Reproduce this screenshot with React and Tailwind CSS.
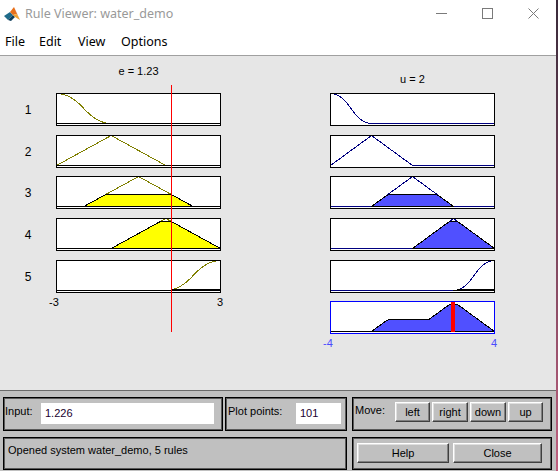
import React from "react";

const zmf = (x, a, b) => {
  if (x <= a) return 1;
  if (x >= b) return 0;
  const m = (a + b) / 2;
  if (x <= m) return 1 - 2 * ((x - a) / (b - a)) ** 2;
  return 2 * ((x - b) / (b - a)) ** 2;
};
const smf = (x, a, b) => 1 - zmf(x, a, b);
const trimf = (x, a, b, c) => Math.max(0, Math.min((x - a) / (b - a), (c - x) / (c - b)));

const W1 = 0.387;
const W2 = 0.887;
const W3 = 0.0255;

const leftRows = [
  { f: (x) => zmf(x, -3, -1), w: 0 },
  { f: (x) => trimf(x, -3, -1, 1), w: 0 },
  { f: (x) => trimf(x, -2, 0, 2), w: W1 },
  { f: (x) => trimf(x, -1, 1, 3), w: W2 },
  { f: (x) => smf(x, 1, 3), w: W3 },
];
const rightRows = [
  { f: (x) => zmf(x, -4, -2), w: 0 },
  { f: (x) => trimf(x, -4, -2, 0), w: 0 },
  { f: (x) => trimf(x, -2, 0, 2), w: W1 },
  { f: (x) => trimf(x, 0, 2, 4), w: W2 },
  { f: (x) => smf(x, 2, 4), w: W3 },
];
const aggF = (x) =>
  Math.max(
    Math.min(trimf(x, -2, 0, 2), W1),
    Math.min(trimf(x, 0, 2, 4), W2),
    Math.min(smf(x, 2, 4), W3)
  );

const rowMargins = ["", "mt-[9px]", "mt-[8px]", "mt-[9px]", "mt-[9px]"];

function Plot({ lo, hi, f, w, side, agg }) {
  const N = 101;
  const xs = Array.from({ length: N }, (_, i) => lo + ((hi - lo) * i) / (N - 1));
  const X = (v) => 0.5 + ((v - lo) / (hi - lo)) * 164;
  const Y = (m) => 30.5 - 30 * m;
  const lineColor = side === "left" ? "#808000" : "#000080";
  const fillColor = side === "left" ? "#ffff00" : "#5050ff";

  let fillPts = null;
  if (agg) {
    const vals = xs.map((v) => aggF(v));
    let first = vals.findIndex((v) => v > 0);
    let last = vals.length - 1 - [...vals].reverse().findIndex((v) => v > 0);
    first = Math.max(0, first - 1);
    last = Math.min(N - 1, last + 1);
    const pts = [];
    for (let i = first; i <= last; i++) pts.push(`${X(xs[i])},${Y(vals[i])}`);
    pts.push(`${X(xs[last])},30.5`, `${X(xs[first])},30.5`);
    fillPts = pts.join(" ");
  } else if (w > 0) {
    const vals = xs.map((v) => Math.min(f(v), w));
    let first = vals.findIndex((v) => v > 0);
    let last = vals.length - 1 - [...vals].reverse().findIndex((v) => v > 0);
    first = Math.max(0, first - 1);
    last = Math.min(N - 1, last + 1);
    const pts = [];
    for (let i = first; i <= last; i++) pts.push(`${X(xs[i])},${Y(vals[i])}`);
    pts.push(`${X(xs[last])},30.5`, `${X(xs[first])},30.5`);
    fillPts = pts.join(" ");
  }

  const curve = f ? xs.map((v) => `${X(v)},${Y(f(v))}`).join(" ") : null;

  return (
    <svg width="165" height="33" viewBox="0 0 165 33" shapeRendering="crispEdges" className="block bg-white">
      {agg ? (
        <line x1="0" y1="30.5" x2="165" y2="30.5" stroke="#000" strokeWidth="1" />
      ) : side === "left" ? (
        <>
          <polyline points={curve} fill="none" stroke={lineColor} strokeWidth="1" />
          <line x1="0" y1="30.5" x2="165" y2="30.5" stroke="#000" strokeWidth="1" />
        </>
      ) : (
        <polyline points={curve} fill="none" stroke={lineColor} strokeWidth="1" />
      )}
      {fillPts && <polygon points={fillPts} fill={fillColor} stroke="#000" strokeWidth="1" />}
      {agg && <rect x="121" y="1" width="4" height="30" fill="#ff0000" />}
      <rect x="0.5" y="0.5" width="164" height="32" fill="none" stroke={agg ? "#0000ff" : "#000"} strokeWidth="1" />
    </svg>
  );
}

function MatlabIcon() {
  return (
    <svg width="16" height="16" viewBox="0 0 16 16">
      <polygon points="0,10 6,6 9,9 4,14" fill="#1f6b8a" />
      <polygon points="4,14 9,9 11,11 7,15" fill="#0d3c5a" />
      <polygon points="6,6 10,1 13,8 9,9" fill="#e8701a" />
      <polygon points="10,1 16,14 13,8" fill="#b5361a" />
      <polygon points="9,9 13,8 16,14 11,11" fill="#f0a030" />
    </svg>
  );
}

function Btn({ children, className }) {
  return (
    <div
      className={
        "flex items-center justify-center bg-[#c0c0c0] border border-t-white border-l-white border-b-[#404040] border-r-[#404040] shadow-[inset_-1px_-1px_0_#808080,inset_1px_1px_0_#dfdfdf] text-[11px] leading-[13px] text-black " +
        className
      }
    >
      {children}
    </div>
  );
}

const frame = "border border-black shadow-[inset_0_0_0_1px_#5a5a5a]";

export default function App() {
  return (
    <div className="flex w-[558px] h-[471px] bg-gradient-to-b from-[#3a2a3a] to-[#c06080] font-['Liberation_Sans',Arial,sans-serif]">
      <div className="flex flex-col w-[556px] h-[471px] bg-white">
        {/* Title bar */}
        <div className="flex items-center h-[30px] bg-white">
          <div className="ml-[4px] mb-[3px]">
            <MatlabIcon />
          </div>
          <div className="ml-[5px] mb-[2px] text-[12.5px] text-[#999999] font-['Noto_Sans',sans-serif]">
            Rule Viewer: water_demo
          </div>
          <div className="ml-auto flex h-full">
            <div className="w-[46px] flex items-center justify-center pb-[3px]">
              <svg width="11" height="11" viewBox="0 0 11 11" shapeRendering="crispEdges">
                <line x1="0" y1="5.5" x2="11" y2="5.5" stroke="#7a7a7a" />
              </svg>
            </div>
            <div className="w-[46px] flex items-center justify-center pb-[3px]">
              <svg width="11" height="11" viewBox="0 0 11 11" shapeRendering="crispEdges">
                <rect x="0.5" y="0.5" width="10" height="10" fill="none" stroke="#7a7a7a" />
              </svg>
            </div>
            <div className="w-[46px] flex items-center justify-center pb-[3px]">
              <svg width="11" height="11" viewBox="0 0 11 11">
                <line x1="0.5" y1="0.5" x2="10.5" y2="10.5" stroke="#7a7a7a" />
                <line x1="10.5" y1="0.5" x2="0.5" y2="10.5" stroke="#7a7a7a" />
              </svg>
            </div>
          </div>
        </div>
        {/* Menu bar */}
        <div className="flex items-center h-[25px] pl-[5px] text-[12.5px] text-black font-['Noto_Sans',sans-serif] bg-white">
          <span className="w-[34px]">File</span>
          <span className="w-[39px]">Edit</span>
          <span className="w-[43px]">View</span>
          <span>Options</span>
        </div>
        <div className="h-px bg-[#a0a0a0]" />
        {/* Plot area */}
        <div className="flex h-[334px] bg-[#e6e6e6] text-black">
          <div className="relative w-[221px]">
            <div className="pt-[8px] pl-[56px]">
              <div className="h-[14px] leading-[14px] text-center text-[11px]">e = 1.23</div>
            </div>
            <div className="mt-[15px] flex flex-col">
              {leftRows.map((r, i) => (
                <div key={i} className={"flex items-center " + rowMargins[i]}>
                  <div className="w-[56px] text-center text-[12px] leading-[14px]">{i + 1}</div>
                  <Plot lo={-3} hi={3} f={r.f} w={r.w} side="left" />
                </div>
              ))}
            </div>
            <div className="mt-[3px] ml-[49px] w-[174px] flex justify-between text-[11px] leading-[13px]">
              <span>-3</span>
              <span>3</span>
            </div>
            <div className="absolute left-[171px] top-[29px] h-[247px] w-px bg-[#ff0000]" />
          </div>
          <div className="ml-[109px] w-[165px]">
            <div className="pt-[16px]">
              <div className="h-[14px] leading-[14px] text-center text-[11px]">u = 2</div>
            </div>
            <div className="mt-[7px] flex flex-col">
              {rightRows.map((r, i) => (
                <div key={i} className={rowMargins[i]}>
                  <Plot lo={-4} hi={4} f={r.f} w={r.w} side="right" />
                </div>
              ))}
              <div className="mt-[8px]">
                <Plot lo={-4} hi={4} agg side="right" />
              </div>
            </div>
            <div className="mt-[3px] -ml-[7px] w-[174px] flex justify-between text-[11px] leading-[13px] text-[#4b4bff]">
              <span>-4</span>
              <span>4</span>
            </div>
          </div>
        </div>
        {/* Bottom panel */}
        <div className="flex flex-col gap-[6px] h-[81px] border-t border-[#6a6a6a] bg-[#c0c0c0] pt-[6px] pl-[3px] text-[11px] leading-[13px] text-black">
          <div className="flex">
            <div className={"flex w-[220px] h-[34px] " + frame}>
              <div className="w-[37px] pl-[1px] pt-[7px]">Input:</div>
              <div className="mt-[5px] w-[173px] h-[21px] bg-white flex items-center pl-[4px] text-[#200030]">1.226</div>
            </div>
            <div className={"ml-[2px] flex w-[122px] h-[34px] " + frame}>
              <div className="w-[70px] pl-[2px] pt-[7px]">Plot points:</div>
              <div className="mt-[5px] w-[45px] h-[21px] bg-white flex items-center pl-[4px] text-[#200030]">101</div>
            </div>
            <div className={"ml-[5px] flex w-[200px] h-[34px] " + frame}>
              <div className="w-[42px] pl-[2px] pt-[6px]">Move:</div>
              <div className="mt-[4px] flex gap-[2px]">
                <Btn className="w-[35px] h-[20px]">left</Btn>
                <Btn className="w-[36px] h-[20px]">right</Btn>
                <Btn className="w-[36px] h-[20px]">down</Btn>
                <Btn className="w-[35px] h-[20px]">up</Btn>
              </div>
            </div>
          </div>
          <div className="flex">
            <div className={"w-[344px] h-[33px] pl-[4px] pt-[6px] " + frame}>Opened system water_demo, 5 rules</div>
            <div className={"ml-[5px] flex w-[200px] h-[33px] pl-[4px] pt-[5px] gap-[4px] " + frame}>
              <Btn className="w-[92px] h-[20px]">Help</Btn>
              <Btn className="w-[89px] h-[20px]">Close</Btn>
            </div>
          </div>
        </div>
      </div>
    </div>
  );
}
